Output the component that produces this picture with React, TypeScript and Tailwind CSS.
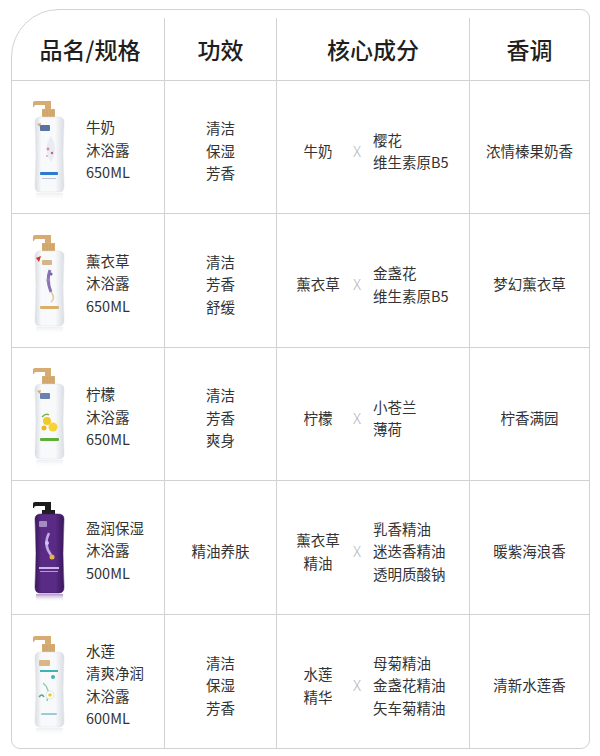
import React from 'react'

type Kind = 'milk' | 'lavender' | 'lemon' | 'purple' | 'lotus'

function Bottle({ kind }: { kind: Kind }) {
  const dark = kind === 'purple'
  const pump = dark ? '#1c1c1c' : '#d6ac72'
  const body = dark ? '#5a2b85' : '#f8f9fb'
  const edge = dark ? '#3a175c' : '#d9dde3'
  const top = dark ? 15 : 19
  return (
    <svg width="42" height="104" viewBox="0 0 42 104" className="shrink-0">
      <defs>
        <linearGradient id={`shade-${kind}`} x1="0" x2="1" y1="0" y2="0">
          <stop offset="0" stopColor={edge} />
          <stop offset="0.22" stopColor={body} />
          <stop offset="0.7" stopColor={body} />
          <stop offset="1" stopColor={edge} />
        </linearGradient>
        <linearGradient id={`fade-${kind}`} x1="0" x2="0" y1="0" y2="1">
          <stop offset="0" stopColor={dark ? '#8a6aac' : '#e6e8ec'} stopOpacity="0.7" />
          <stop offset="1" stopColor="#ffffff" stopOpacity="0" />
        </linearGradient>
      </defs>
      {/* pump */}
      <path d="M4 4.5 Q4 3 6 3 H22 V7 H7 Q5 7 5 9 H4 Z" fill={pump} />
      <rect x="16" y="3" width="6" height="9" fill={pump} />
      <path d={`M13 11 H26 V${top} H13 Z`} fill={pump} />
      <path d={`M15 12 V${top} M18 12 V${top} M21 12 V${top} M24 12 V${top}`} stroke={dark ? '#333' : '#c2975e'} strokeWidth="0.5" />
      {/* body */}
      <path
        d={`M6 ${top + 5} Q6 ${top} 12 ${top} H29 Q35 ${top} 35 ${top + 5} Q33 55 35 88 Q35 94 30 94 H11 Q6 94 6 88 Q8 55 6 ${top + 5} Z`}
        fill={`url(#shade-${kind})`}
        stroke={edge}
        strokeWidth="0.5"
      />
      <rect x="7" y="95" width="27" height="8" fill={`url(#fade-${kind})`} />
      {kind === 'milk' && (
        <>
          <path d="M8 26 L12 25 L11 29 Z" fill="#d6ac72" />
          <rect x="11" y="27" width="10" height="6" rx="1" fill="#2f4f8f" opacity="0.8" />
          <path d="M22 38 Q13 50 22 64 Q30 52 22 38Z" fill="#e8edf4" />
          <circle cx="19" cy="51" r="1.4" fill="#d98ba0" />
          <circle cx="23" cy="55" r="1.2" fill="#c65f80" />
          <circle cx="18" cy="58" r="1" fill="#e3a4b6" />
          <rect x="11" y="74" width="18" height="3" rx="1" fill="#2d7ad0" />
          <rect x="13" y="80" width="14" height="1" fill="#b9c3d2" />
        </>
      )}
      {kind === 'lavender' && (
        <>
          <path d="M7 26 L12 24 L10 30 Z" fill="#d0322b" />
          <rect x="13" y="28" width="10" height="5" rx="1" fill="#c49a5a" opacity="0.7" />
          <path d="M21 38 Q17 48 22 60" stroke="#8b73b6" strokeWidth="3" fill="none" />
          <circle cx="22" cy="42" r="1.6" fill="#7a62a8" />
          <circle cx="19" cy="48" r="1.6" fill="#9a85c4" />
          <path d="M22 60 Q27 66 22 70" stroke="#e0c9a0" strokeWidth="1.5" fill="none" />
          <rect x="11" y="74" width="19" height="3" rx="1" fill="#d8b06a" />
        </>
      )}
      {kind === 'lemon' && (
        <>
          <path d="M8 26 L12 25 L11 29 Z" fill="#d6ac72" />
          <rect x="11" y="28" width="10" height="6" rx="1" fill="#2f4f8f" opacity="0.7" />
          <circle cx="18" cy="56" r="4" fill="#f2c92c" />
          <circle cx="24" cy="62" r="4.5" fill="#f5d437" />
          <circle cx="15" cy="63" r="2.5" fill="#e8b820" />
          <path d="M13 52 Q17 48 20 50" stroke="#7eb04a" strokeWidth="1.5" fill="none" />
          <rect x="11" y="73" width="19" height="3" rx="1" fill="#5fae3a" />
        </>
      )}
      {kind === 'purple' && (
        <>
          <rect x="10" y="22" width="8" height="6" rx="1" fill="#d9c9ef" opacity="0.6" />
          <path d="M20 34 Q14 46 22 56" stroke="#c2a8e8" strokeWidth="2.5" fill="none" />
          <circle cx="18" cy="44" r="2" fill="#d6c2f2" />
          <circle cx="23" cy="58" r="2.5" fill="#e6b640" />
          <rect x="10" y="68" width="20" height="2" fill="#cdb8ea" />
          <rect x="11" y="72" width="18" height="1" fill="#b79ad8" />
        </>
      )}
      {kind === 'lotus' && (
        <>
          <rect x="10" y="27" width="11" height="6" rx="1" fill="#d6ac72" opacity="0.85" />
          <rect x="11" y="37" width="18" height="2" fill="#3fb3b0" />
          <circle cx="24" cy="44" r="2" fill="#3fb3b0" />
          <path d="M14 50 Q22 56 18 68" stroke="#8fc9b3" strokeWidth="1.5" fill="none" />
          <circle cx="21" cy="62" r="4" fill="#ffffff" stroke="#cfe6da" strokeWidth="0.8" />
          <circle cx="21" cy="62" r="1.8" fill="#f2c629" />
          <path d="M10 64 Q13 60 15 64" stroke="#5aa882" strokeWidth="1.5" fill="none" />
          <rect x="12" y="80" width="16" height="2" rx="1" fill="#9fc8d8" />
        </>
      )}
    </svg>
  )
}

type Row = {
  kind: Kind
  name: string[]
  effects: string[]
  base: string[]
  extra: string[]
  scent: string
  h: string
}

const rows: Row[] = [
  { kind: 'milk', name: ['牛奶', '沐浴露', '650ML'], effects: ['清洁', '保湿', '芳香'], base: ['牛奶'], extra: ['樱花', '维生素原B5'], scent: '浓情榛果奶香', h: 'h-[133px]' },
  { kind: 'lavender', name: ['薰衣草', '沐浴露', '650ML'], effects: ['清洁', '芳香', '舒缓'], base: ['薰衣草'], extra: ['金盏花', '维生素原B5'], scent: '梦幻薰衣草', h: 'h-[134px]' },
  { kind: 'lemon', name: ['柠檬', '沐浴露', '650ML'], effects: ['清洁', '芳香', '爽身'], base: ['柠檬'], extra: ['小苍兰', '薄荷'], scent: '柠香满园', h: 'h-[133px]' },
  { kind: 'purple', name: ['盈润保湿', '沐浴露', '500ML'], effects: ['精油养肤'], base: ['薰衣草', '精油'], extra: ['乳香精油', '迷迭香精油', '透明质酸钠'], scent: '暖紫海浪香', h: 'h-[134px]' },
  { kind: 'lotus', name: ['水莲', '清爽净润', '沐浴露', '600ML'], effects: ['清洁', '保湿', '芳香'], base: ['水莲', '精华'], extra: ['母菊精油', '金盏花精油', '矢车菊精油'], scent: '清新水莲香', h: 'h-[133px]' },
]

function Lines({ items }: { items: string[] }) {
  return (
    <div className="flex flex-col">
      {items.map((t) => (
        <span key={t}>{t}</span>
      ))}
    </div>
  )
}

export default function App() {
  return (
    <div className="h-[756px] w-[600px] bg-white pl-[11px] pt-[9px] font-['Noto_Sans_CJK_SC','Noto_Sans',sans-serif]">
      <div className="w-[579px] overflow-hidden rounded-tl-[48px] rounded-tr-[9px] rounded-b-[9px] border border-[#d2d2d4] bg-white">
        <div className="flex h-[71px] border-b border-[#d2d2d4] pt-[8px] text-[23px] font-medium text-[#1f1f1f]">
          <div className="flex w-[153px] items-center justify-center border-r border-[#d2d2d4] pl-[4px]">品名/规格</div>
          <div className="flex w-[112px] items-center justify-center border-r border-[#d2d2d4]">功效</div>
          <div className="flex w-[193px] items-center justify-center border-r border-[#d2d2d4]">核心成分</div>
          <div className="flex flex-1 items-center justify-center">香调</div>
        </div>
        {rows.map((r, i) => (
          <div
            key={r.kind}
            className={`flex ${r.h} text-[14.5px] leading-[22.5px] text-[#333333] ${i < rows.length - 1 ? 'border-b border-[#d2d2d4]' : ''}`}
          >
            <div className="flex w-[153px] items-center border-r border-[#d2d2d4] pl-[17px] pt-[6px]">
              <Bottle kind={r.kind} />
              <div className="ml-[15px]">
                <Lines items={r.name} />
              </div>
            </div>
            <div className="flex w-[112px] items-center justify-center border-r border-[#d2d2d4] pt-[8px]">
              <Lines items={r.effects} />
            </div>
            <div className="flex w-[193px] items-center border-r border-[#d2d2d4] pl-[9px] pt-[8px]">
              <div className="w-[64px] text-center">
                <Lines items={r.base} />
              </div>
              <span className="w-[14px] text-center text-[15px] font-light text-[#b5b5b5]">X</span>
              <div className="ml-[9px]">
                <Lines items={r.extra} />
              </div>
            </div>
            <div className="flex flex-1 items-center justify-center pt-[8px]">{r.scent}</div>
          </div>
        ))}
      </div>
    </div>
  )
}
